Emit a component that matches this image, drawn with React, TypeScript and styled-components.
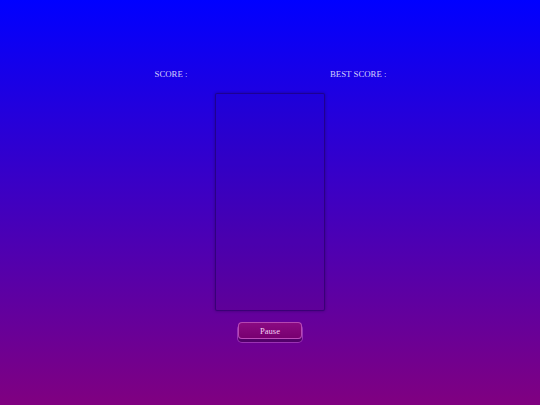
import React from "react"
import styled, { createGlobalStyle } from "styled-components"

const GlobalStyle = createGlobalStyle`
    html, body {
        margin: 0;
        padding: 0;
        height: 100%;
    }
    body {
        background: linear-gradient(to bottom, #0000ff 0%, #800080 100%);
        background-attachment: fixed;
        font-family: "Liberation Serif", "Times New Roman", serif;
        min-height: 405px;
    }
`

const Screen = styled.div`
    height: 405px;
    display: flex;
    flex-direction: column;
    align-items: center;
    padding-top: 68px;
    box-sizing: border-box;
`

const ScoreBar = styled.div`
    width: 232px;
    padding-left: 1px;
    display: flex;
    justify-content: space-between;
    font-size: 8.8px;
    line-height: 12px;
    color: rgba(230, 230, 255, 0.9);
`

const Board = styled.div`
    width: 110px;
    height: 218px;
    margin-top: 13px;
    box-sizing: border-box;
    border: 1px solid rgba(30, 0, 90, 0.55);
    border-radius: 2px;
    background: rgba(20, 0, 60, 0.04);
    box-shadow: 0 0 3px rgba(20, 0, 60, 0.45);
`

const PauseButton = styled.button`
    margin-top: 11px;
    width: 64px;
    height: 17px;
    padding: 0;
    font-family: inherit;
    font-size: 8.5px;
    color: #f4d0f4;
    background: linear-gradient(to bottom, #8a0a82 0%, #780070 100%);
    border: 1px solid rgba(230, 130, 230, 0.55);
    border-radius: 4px;
    box-shadow: 0 3px 0 #52006a, 0 3px 0 1px rgba(210, 110, 220, 0.45);
    cursor: pointer;
`

export default function App() {
    return (
        <>
            <GlobalStyle />
            <Screen>
                <ScoreBar>
                    <span>SCORE :</span>
                    <span>BEST SCORE :</span>
                </ScoreBar>
                <Board />
                <PauseButton>Pause</PauseButton>
            </Screen>
        </>
    )
}
